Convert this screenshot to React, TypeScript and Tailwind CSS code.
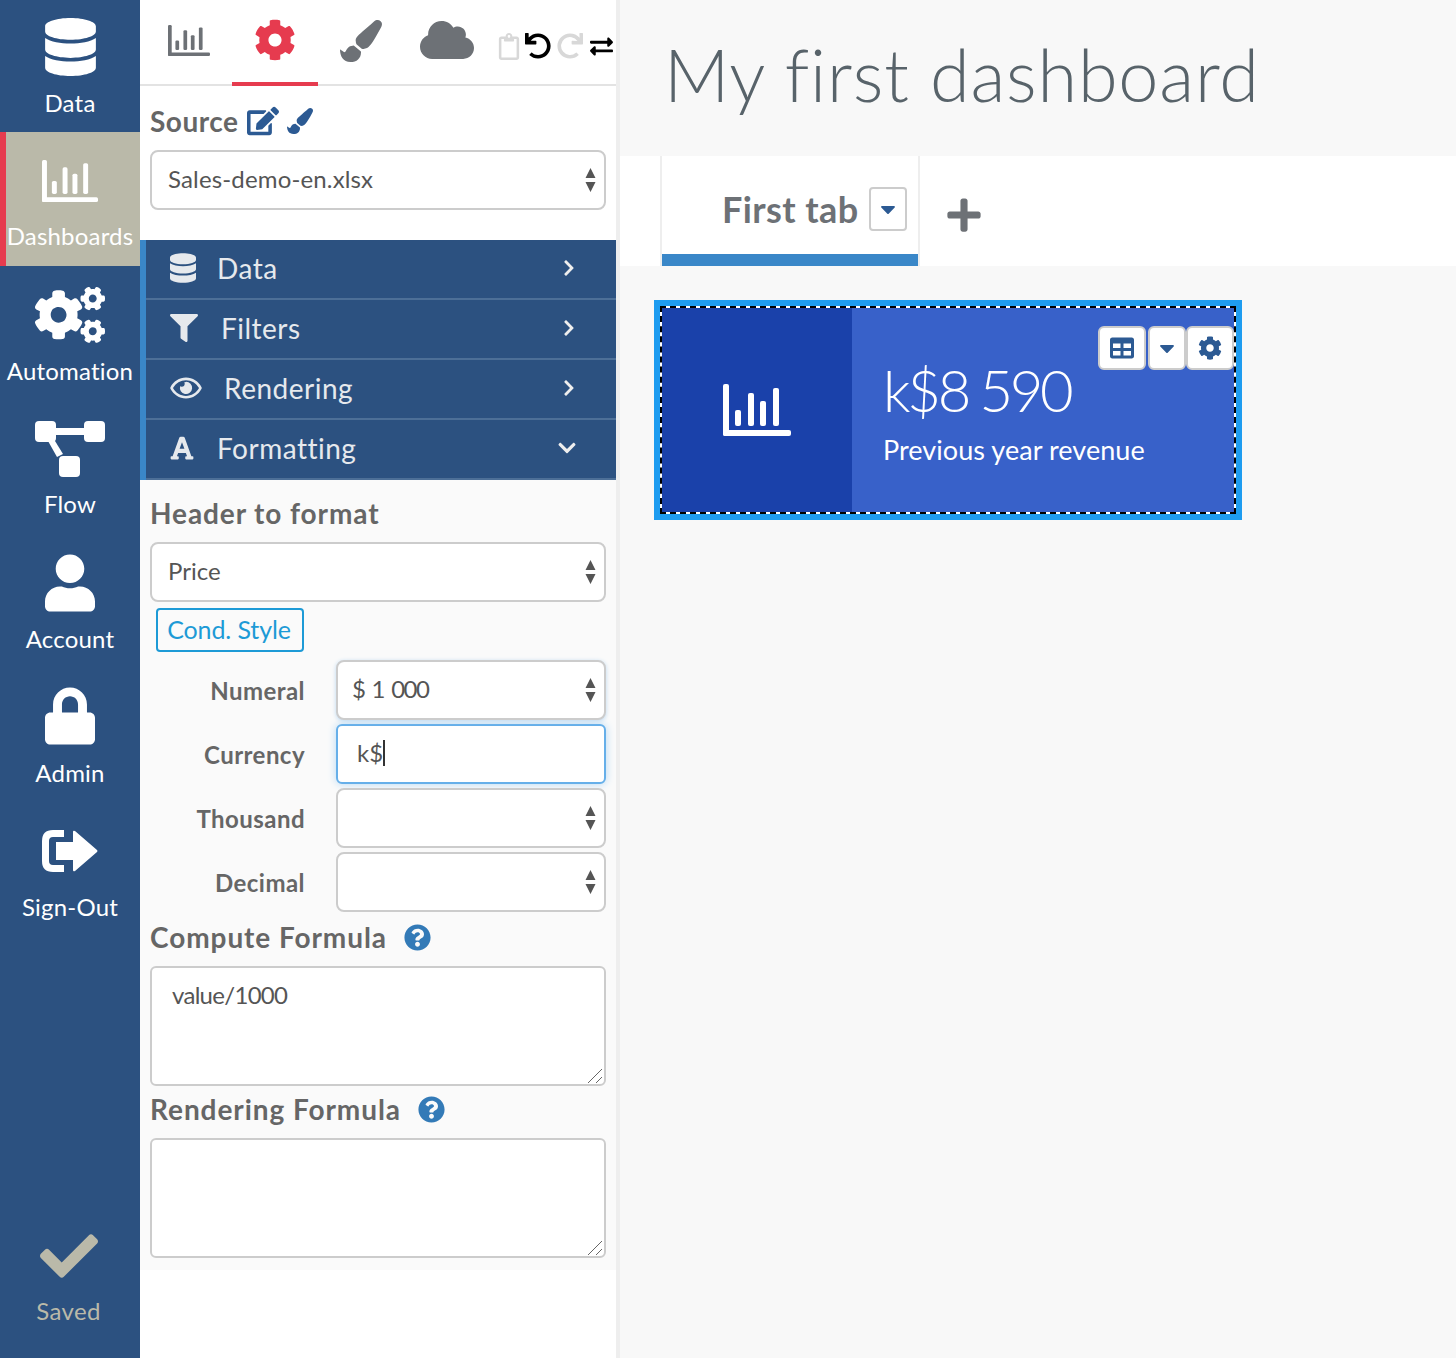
import type { ReactNode } from 'react';
import {
  FaDatabase, FaCogs, FaUser, FaLock, FaCheck, FaCog, FaPaintBrush, FaCloud, FaEdit, FaFilter, FaRegEye,
  FaFont, FaChevronRight, FaChevronDown, FaQuestionCircle, FaPlus, FaCaretDown, FaTable, FaExchangeAlt,
  FaUndo, FaRedo, FaRegClipboard,
} from 'react-icons/fa';

const FONT = "font-['Lato','Noto_Sans',sans-serif]";

function BarChart({ className }: { className?: string }) {
  return (
    <svg viewBox="0 0 68 52" fill="currentColor" preserveAspectRatio="none" className={className}>
      <rect x="0" y="0" width="6" height="52" rx="2" />
      <rect x="0" y="46" width="68" height="6" rx="2" />
      <rect x="12" y="26" width="6" height="16" rx="2" />
      <rect x="25" y="9" width="6" height="33" rx="2" />
      <rect x="37" y="17" width="6" height="25" rx="2" />
      <rect x="50" y="4" width="6" height="38" rx="2" />
    </svg>
  );
}

function FlowIcon() {
  return (
    <svg viewBox="0 0 70 56" fill="white" className="w-[70px] h-[56px]">
      <rect x="0" y="0" width="21" height="21" rx="4" />
      <rect x="49" y="0" width="21" height="21" rx="4" />
      <rect x="24" y="35" width="21" height="21" rx="4" />
      <rect x="20" y="7" width="30" height="7" />
      <path d="M13 20 L20 20 L28 33 L22 36 Z" />
    </svg>
  );
}

function SignOutIcon() {
  return (
    <svg viewBox="0 0 56 42" fill="white" className="w-[56px] h-[42px]">
      <path d="M11 0 H22 V7 H11 Q7 7 7 11 V31 Q7 35 11 35 H22 V42 H11 Q0 42 0 31 V11 Q0 0 11 0 Z" />
      <path d="M33 1 L55 20 Q56 21 55 22 L33 41 Q31 42 31 40 V30 H14 V12 H31 V2 Q31 0 33 1 Z" />
    </svg>
  );
}

function NavItem({ icon, label, active, h = 'h-[134px]', pb = 'pb-[11px]', mt = 'mt-[2px]' }: { icon: ReactNode; label: string; active?: boolean; h?: string; pb?: string; mt?: string }) {
  return (
    <div className={`${h} flex flex-col items-center ${active ? 'bg-[#bab9a9] border-l-[6px] border-[#e63b4f] pr-[6px]' : ''}`}>
      <div className={`h-[88px] flex items-end justify-center ${pb}`}>{icon}</div>
      <div className={`text-[24px] leading-[30px] tracking-[0.2px] text-white whitespace-nowrap ${mt}`}>{label}</div>
    </div>
  );
}

function Arrows() {
  return (
    <svg viewBox="0 0 10 24" fill="#555" className="w-[11px] h-[24px] absolute right-[8px] top-1/2 -translate-y-1/2">
      <path d="M5 0 L10 10 H0 Z M5 24 L0 14 H10 Z" />
    </svg>
  );
}

function SelectBox({ value, className = '' }: { value?: string; className?: string }) {
  return (
    <div className={`relative h-[60px] bg-white border-2 border-[#ccc] rounded-[8px] flex items-center text-[24px] text-[#555] ${className}`}>
      {value}
      <Arrows />
    </div>
  );
}

function AccordionRow({ icon, label, open }: { icon: ReactNode; label: string; open?: boolean }) {
  return (
    <div className="h-[60px] flex items-center pl-[24px] pr-[38px] pb-[2px] text-[28px] tracking-[0.5px] text-[#e6e9ed] border-b-2 border-[#4d6f97]">
      {icon}
      <span className="flex-1">{label}</span>
      {open
        ? <FaChevronDown className="w-[20px] h-[20px] mr-[1px] text-[#eeeeee]" />
        : <FaChevronRight className="w-[18px] h-[18px] text-[#eeeeee]" />}
    </div>
  );
}

function FieldRow({ label, children }: { label: string; children: ReactNode }) {
  return (
    <div className="flex items-center h-[64px]">
      <div className="w-[155px] pt-[2px] text-right text-[24px] tracking-[0.45px] font-bold text-[#666]">{label}</div>
      <div className="ml-[31px] flex-1">{children}</div>
    </div>
  );
}

function FormulaArea({ value }: { value: string }) {
  return (
    <div className="relative mt-[10px] h-[120px]">
      <textarea
        readOnly
        value={value}
        className="block w-full h-full resize-none bg-white border-2 border-[#ccc] rounded-[6px] px-[20px] py-[9px] text-[24px] tracking-[-0.7px] text-[#555]"
      />
      <svg viewBox="0 0 16 16" fill="none" stroke="#666" className="absolute right-[3px] bottom-[2px] w-[16px] h-[16px]">
        <path d="M1 15 L15 1 M9 15 L15 9" />
      </svg>
    </div>
  );
}

const toolBtn = 'h-[44px] bg-white border-2 border-[#ccc] rounded-[6px] flex items-center justify-center';

export default function App() {
  return (
    <div className={`flex w-[1456px] h-[1358px] overflow-hidden bg-[#f8f8f8] ${FONT}`}>
      <aside className="w-[140px] shrink-0 bg-[#2c5180] flex flex-col">
        <NavItem h="h-[132px]" pb="pb-[12px]" mt="mt-0" icon={<FaDatabase className="w-[51px] h-[58px] text-white" />} label="Data" />
        <NavItem active pb="pb-[18px]" mt="mt-[1px]" icon={<BarChart className="w-[56px] h-[42px] text-white" />} label="Dashboards" />
        <NavItem icon={<FaCogs className="w-[70px] h-[56px] text-white" />} label="Automation" />
        <NavItem mt="mt-[1px]" icon={<FlowIcon />} label="Flow" />
        <NavItem pb="pb-[10px]" icon={<FaUser className="w-[50px] h-[58px] text-white" />} label="Account" />
        <NavItem icon={<FaLock className="w-[50px] h-[58px] text-white" />} label="Admin" />
        <NavItem pb="pb-[18px]" icon={<SignOutIcon />} label="Sign-Out" />
        <div className="mt-auto h-[138px] flex flex-col items-center pr-[3px]">
          <FaCheck className="w-[58px] h-[58px] text-[#bab9a9] mt-[7px]" />
          <div className="text-[24px] tracking-[0.4px] text-[#bab9a9] mt-[8px]">Saved</div>
        </div>
      </aside>

      <section className="w-[480px] shrink-0 bg-white border-r-4 border-[#eeeeee] flex flex-col">
        <div className="h-[86px] border-b-2 border-[#e3e3e3] flex items-start relative">
          <BarChart className="absolute left-[28px] top-[25px] w-[42px] h-[31px] text-[#6d7176]" />
          <div className="absolute left-[92px] top-0 w-[86px] h-[86px] border-b-4 border-[#e63b4f] flex justify-center pt-[19px]">
            <FaCog className="w-[42px] h-[42px] text-[#e63b4f]" />
          </div>
          <FaPaintBrush className="absolute left-[200px] top-[20px] w-[42px] h-[42px] text-[#6d7176]" />
          <FaCloud className="absolute left-[280px] top-[17px] w-[54px] h-[46px] text-[#6d7176]" />
          <FaRegClipboard className="absolute left-[358px] top-[33px] w-[22px] h-[27px] text-[#d8d8d8]" />
          <FaUndo className="absolute left-[385px] top-[33px] w-[26px] h-[26px] text-black" />
          <FaRedo className="absolute left-[417px] top-[33px] w-[26px] h-[26px] text-[#d8d8d8]" />
          <FaExchangeAlt className="absolute left-[449px] top-[35px] w-[25px] h-[23px] text-black" />
        </div>

        <div className="px-[10px] pt-[17px]">
          <div className="h-[36px] flex items-center text-[28px] tracking-[0.5px] font-bold text-[#666]">
            Source
            <FaEdit className="ml-[9px] w-[32px] h-[30px] text-[#2c5a93]" />
            <FaPaintBrush className="ml-[8px] w-[26px] h-[26px] text-[#2c5a93]" />
          </div>
          <SelectBox value="Sales-demo-en.xlsx" className="mt-[11px] pl-[16px] pb-[2px] tracking-[0.15px]" />
        </div>

        <div className="mt-[30px] h-[240px] bg-[#2c5180] border-l-[6px] border-[#3a87c8]">
          <AccordionRow icon={<FaDatabase className="w-[26px] h-[30px] mr-[21px]" />} label="Data" />
          <AccordionRow icon={<FaFilter className="w-[28px] h-[28px] mr-[23px]" />} label="Filters" />
          <AccordionRow icon={<FaRegEye className="w-[32px] h-[28px] mr-[22px]" />} label="Rendering" />
          <AccordionRow icon={<FaFont className="w-[24px] h-[26px] mr-[23px]" />} label="Formatting" open />
        </div>

        <div className="h-[790px] bg-[#fafafa] px-[10px] pt-[15px]">
          <div className="h-[36px] text-[28px] leading-[36px] tracking-[0.9px] font-bold text-[#666]">Header to format</div>
          <SelectBox value="Price" className="mt-[11px] pl-[16px] pb-[2px]" />
          <div className="mt-[6px] ml-[6px] w-[148px] h-[44px] pr-[2px] border-2 border-[#1d9ad6] rounded-[4px] flex items-center justify-center text-[25px] tracking-[-0.1px] text-[#1d9ad6]">
            Cond. Style
          </div>
          <div className="mt-[6px]">
            <FieldRow label="Numeral"><SelectBox value="$ 1 000" className="pl-[14px] pb-[2px] tracking-[-1.5px] [word-spacing:2.5px] shadow-[0_1px_4px_#bcd8f0]" /></FieldRow>
            <FieldRow label="Currency">
              <div className="h-[60px] bg-white border-2 border-[#66afe9] rounded-[6px] shadow-[0_0_8px_#b5d9f5] flex items-center pl-[19px] pb-[2px] text-[24px] text-[#555]">
                k$<span className="w-[2px] h-[26px] bg-[#333]" />
              </div>
            </FieldRow>
            <FieldRow label="Thousand"><SelectBox /></FieldRow>
            <FieldRow label="Decimal"><SelectBox /></FieldRow>
          </div>
          <div className="mt-[5px] h-[36px] flex items-center text-[28px] tracking-[0.93px] font-bold text-[#666]">
            Compute Formula
            <FaQuestionCircle className="ml-[17px] w-[27px] h-[27px] text-[#337ab7]" />
          </div>
          <div className="pt-[1px]"><FormulaArea value="value/1000" /></div>
          <div className="mt-[5px] h-[36px] flex items-center text-[28px] tracking-[0.93px] font-bold text-[#666]">
            Rendering Formula
            <FaQuestionCircle className="ml-[17px] w-[27px] h-[27px] text-[#337ab7]" />
          </div>
          <div className="pt-[1px]"><FormulaArea value="" /></div>
        </div>
      </section>

      <main className="flex-1 flex flex-col">
        <h1 className="h-[156px] pl-[44px] pt-[30px] text-[72px] leading-[88px] font-light tracking-[0.8px] [font-variant-ligatures:none] text-[#58636a]">My first dashboard</h1>
        <div className="h-[110px] bg-white flex pl-[40px]">
          <div className="w-[260px] border-x-2 border-[#eee] flex flex-col">
            <div className="flex-1 flex items-center pl-[60px] pt-[8px]">
              <span className="text-[36px] tracking-[0.4px] font-bold text-[#6d7176]">First tab</span>
              <span className="ml-[10px] w-[38px] h-[44px] border-2 border-[#ccc] rounded-[4px] flex items-center justify-center">
                <FaCaretDown className="w-[24px] h-[24px] text-[#2c5a93]" />
              </span>
            </div>
            <div className="h-[12px] bg-[#3a87c8]" />
          </div>
          <FaPlus className="ml-[25px] mt-[40px] w-[38px] h-[38px] text-[#6d7176]" />
        </div>
        <div className="pl-[34px] pt-[34px]">
          <div className="w-[588px] h-[220px] border-[6px] border-[#1e9cf0] relative">
            <div className="h-full border-2 border-dashed border-black flex bg-white">
              <div className="w-[190px] bg-[#1a41aa] flex items-center justify-center">
                <BarChart className="w-[68px] h-[52px] text-white" />
              </div>
              <div className="flex-1 bg-[#3861c9] text-white pl-[31px] pt-[43px]">
                <div className="text-[58px] leading-[78px] font-light tracking-[-3.3px] [word-spacing:-1px]">k$8 590</div>
                <div className="text-[27px] leading-[36px] mt-[3px] tracking-[0.05px]">Previous year revenue</div>
              </div>
            </div>
            <div className="absolute top-[20px] right-[2px] flex">
              <span className={`${toolBtn} w-[48px] mr-[2px]`}><FaTable className="w-[24px] h-[24px] text-[#2c5a93]" /></span>
              <span className={`${toolBtn} w-[38px]`}><FaCaretDown className="w-[24px] h-[24px] text-[#2c5a93]" /></span>
              <span className={`${toolBtn} w-[48px]`}><FaCog className="w-[24px] h-[24px] text-[#2c5a93]" /></span>
            </div>
          </div>
        </div>
      </main>
    </div>
  );
}
